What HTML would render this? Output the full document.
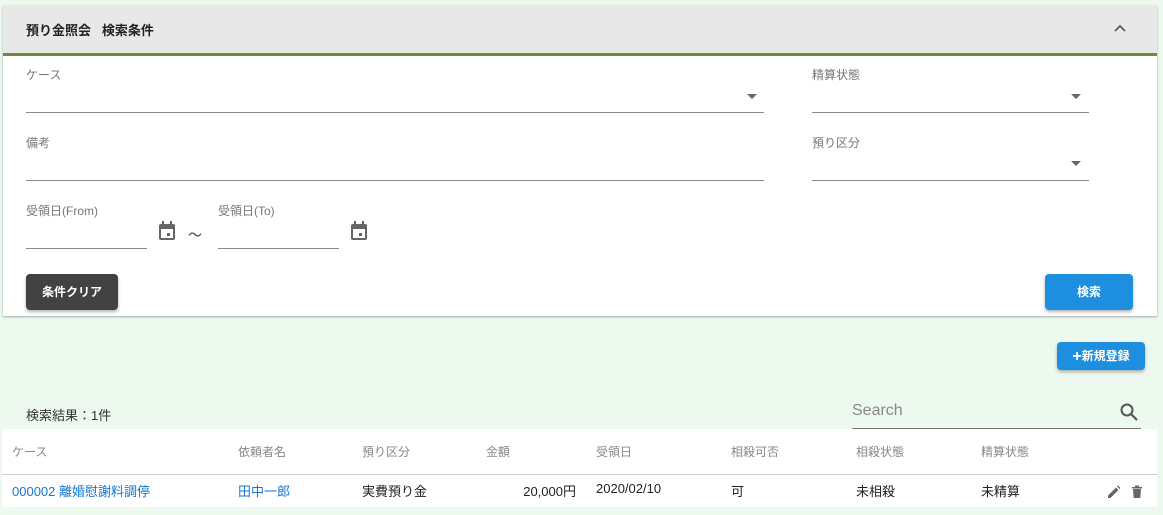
<!DOCTYPE html>
<html><head><meta charset="utf-8"><style>
body{margin:0;width:1163px;height:515px;background:#edf9ef;font-family:"Liberation Sans","Noto Sans CJK JP",sans-serif;position:relative;overflow:hidden;font-size:13px;color:#222}
.a{position:absolute}
.lbl{color:#777;font-size:12px}
.ln{height:1px;background:#8a8a8a}
.tri{width:0;height:0;border-left:5px solid transparent;border-right:5px solid transparent;border-top:5px solid #666}
.th{color:#888;font-size:12px}
.r{top:481px}
</style></head><body>
<div class="a" style="left:3px;top:5px;width:1154px;height:311px;background:#fff;box-shadow:0 1px 2px rgba(0,0,0,.3)"></div>
<div class="a" style="left:3px;top:5px;width:1154px;height:48px;background:#e8e8e8"></div>
<div class="a" style="left:3px;top:53px;width:1154px;height:3px;background:#6e8b3d"></div>
<div class="a" style="left:26px;top:20px;font-weight:bold;font-size:13px">預り金照会&nbsp;&nbsp;&nbsp;検索条件</div>
<svg class="a" style="left:1113px;top:23px" width="14" height="10" viewBox="0 0 14 10"><path d="M2 8 L7 3 L12 8" fill="none" stroke="#555" stroke-width="1.6"/></svg>

<div class="a lbl" style="left:26px;top:66px">ケース</div>
<div class="a ln" style="left:26px;top:112px;width:738px"></div>
<div class="a tri" style="left:747px;top:94px"></div>
<div class="a lbl" style="left:812px;top:66px">精算状態</div>
<div class="a ln" style="left:812px;top:112px;width:277px"></div>
<div class="a tri" style="left:1071px;top:94px"></div>

<div class="a lbl" style="left:26px;top:134px">備考</div>
<div class="a ln" style="left:26px;top:180px;width:738px"></div>
<div class="a lbl" style="left:812px;top:134px">預り区分</div>
<div class="a ln" style="left:812px;top:180px;width:277px"></div>
<div class="a tri" style="left:1071px;top:161px"></div>

<div class="a lbl" style="left:26px;top:202px">受領日(From)</div>
<div class="a ln" style="left:26px;top:248px;width:121px"></div>
<svg class="a" style="left:157px;top:220px" width="20" height="22" viewBox="0 0 20 22"><rect x="2" y="4" width="16" height="16" rx="2" fill="#666"/><rect x="4" y="9" width="12" height="9" fill="#fff"/><rect x="5" y="1" width="2" height="4" fill="#666"/><rect x="13" y="1" width="2" height="4" fill="#666"/><rect x="10" y="13" width="3" height="3" fill="#666"/></svg>
<div class="a" style="left:188px;top:225px;color:#444;font-size:14px">～</div>
<div class="a lbl" style="left:218px;top:202px">受領日(To)</div>
<div class="a ln" style="left:218px;top:248px;width:121px"></div>
<svg class="a" style="left:349px;top:220px" width="20" height="22" viewBox="0 0 20 22"><rect x="2" y="4" width="16" height="16" rx="2" fill="#666"/><rect x="4" y="9" width="12" height="9" fill="#fff"/><rect x="5" y="1" width="2" height="4" fill="#666"/><rect x="13" y="1" width="2" height="4" fill="#666"/><rect x="10" y="13" width="3" height="3" fill="#666"/></svg>

<div class="a" style="left:26px;top:274px;width:92px;height:36px;background:#424242;border-radius:4px;color:#fff;font-weight:bold;font-size:12px;line-height:36px;text-align:center;box-shadow:0 2px 3px rgba(0,0,0,.3)">条件クリア</div>
<div class="a" style="left:1045px;top:274px;width:88px;height:36px;background:#1e8fde;border-radius:4px;color:#fff;font-weight:bold;font-size:12px;line-height:36px;text-align:center;box-shadow:0 2px 3px rgba(0,0,0,.3)">検索</div>

<div class="a" style="left:1057px;top:342px;width:88px;height:28px;background:#1e8fde;border-radius:4px;color:#fff;font-weight:bold;font-size:12px;line-height:28px;text-align:center;box-shadow:0 2px 3px rgba(0,0,0,.3)"><span style="font-size:16px;vertical-align:-1px">+</span>新規登録</div>

<div class="a" style="left:26px;top:405px;font-size:13px;color:#333">検索結果：1件</div>
<div class="a" style="left:852px;top:402px;font-size:16px;color:#888">Search</div>
<div class="a ln" style="left:852px;top:428px;width:289px;background:#777"></div>
<svg class="a" style="left:1119px;top:402px" width="20" height="20" viewBox="0 0 20 20"><circle cx="8" cy="8" r="5.5" fill="none" stroke="#555" stroke-width="2"/><path d="M12 12 L18 18" stroke="#555" stroke-width="2.2"/></svg>

<div class="a" style="left:2px;top:429px;width:1155px;height:78px;background:#fff"></div>
<div class="a" style="left:2px;top:474px;width:1155px;height:1px;background:#ccc"></div>
<div class="a th" style="left:12px;top:443px">ケース</div>
<div class="a th" style="left:238px;top:443px">依頼者名</div>
<div class="a th" style="left:362px;top:443px">預り区分</div>
<div class="a th" style="left:486px;top:443px">金額</div>
<div class="a th" style="left:596px;top:443px">受領日</div>
<div class="a th" style="left:731px;top:443px">相殺可否</div>
<div class="a th" style="left:856px;top:443px">相殺状態</div>
<div class="a th" style="left:981px;top:443px">精算状態</div>

<div class="a r" style="left:12px;color:#1976d2">000002 離婚慰謝料調停</div>
<div class="a r" style="left:238px;color:#1976d2">田中一郎</div>
<div class="a r" style="left:362px">実費預り金</div>
<div class="a r" style="left:486px;width:90px;text-align:right">20,000円</div>
<div class="a r" style="left:596px">2020/02/10</div>
<div class="a r" style="left:731px">可</div>
<div class="a r" style="left:856px">未相殺</div>
<div class="a r" style="left:981px">未精算</div>
<svg class="a" style="left:1107px;top:485px" width="14" height="14" viewBox="0 0 14 14"><path d="M1 13 L1 10.5 L9 2.5 L11.5 5 L3.5 13 Z M10 1.5 L11 0.5 L13.5 3 L12.5 4 Z" fill="#666"/></svg>
<svg class="a" style="left:1131px;top:485px" width="12" height="14" viewBox="0 0 12 14"><rect x="1" y="2" width="10" height="1.5" fill="#666"/><rect x="4" y="0.5" width="4" height="1.5" fill="#666"/><path d="M2 4 H10 L9.3 13 H2.7 Z" fill="#666"/></svg>
</body></html>
